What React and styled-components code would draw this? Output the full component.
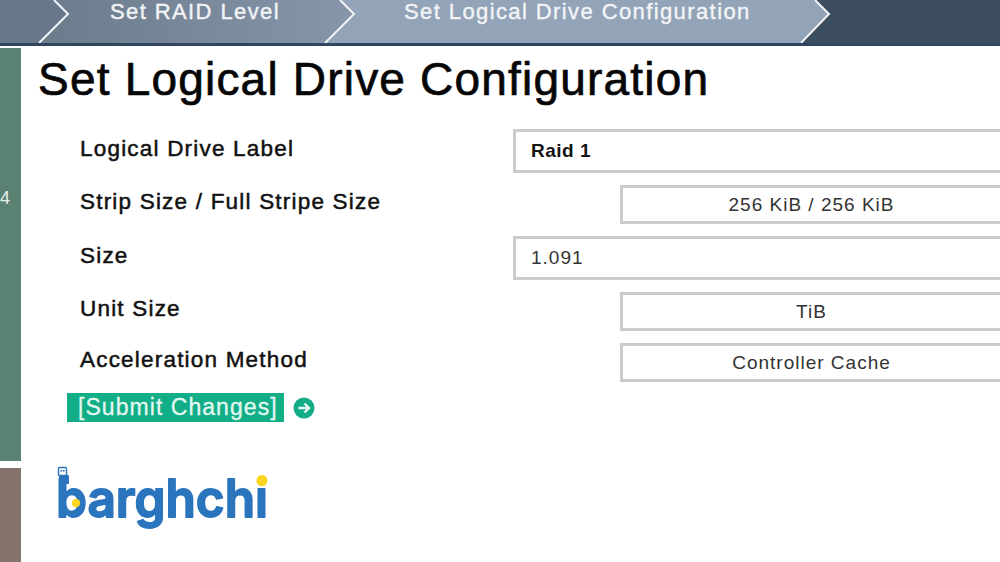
import React from "react";
import styled, { createGlobalStyle } from "styled-components";

const GlobalStyle = createGlobalStyle`
  html, body {
    margin: 0;
    padding: 0;
    background: #fff;
    overflow: hidden;
  }
  body {
    font-family: "Liberation Sans", Arial, sans-serif;
  }
`;

const Page = styled.div`
  position: relative;
  width: 1000px;
  height: 562px;
  display: flex;
  flex-direction: column;
  overflow: hidden;
`;

const Header = styled.div`
  position: relative;
  height: 43px;
  flex: none;
  display: flex;
  align-items: flex-start;
  background: #3c4d60;
  border-bottom: 3px solid #2f4560;
  overflow: hidden;
`;

const Crumbs = styled.svg`
  position: absolute;
  left: 0;
  top: 0;
`;

const Crumb = styled.span`
  position: relative;
  font-size: 22px;
  line-height: 24px;
  color: #f2f4f6;
  letter-spacing: 1.4px;
  -webkit-text-stroke: 0.4px #f2f4f6;
  white-space: nowrap;
  margin-left: ${(p) => p.$left}px;
`;

const Body = styled.div`
  flex: 1;
  display: flex;
  padding-top: 2px;
  min-height: 0;
`;

const Side = styled.div`
  width: 21px;
  flex: none;
  display: flex;
  flex-direction: column;
  gap: 7px;
`;

const GreenTab = styled.div`
  height: 413px;
  background: #5b8172;
  color: #e6eeea;
  font-size: 18px;
  line-height: 20px;
  padding-top: 140px;
  box-sizing: border-box;
  overflow: hidden;
`;

const BrownTab = styled.div`
  flex: 1;
  background: #85746d;
`;

const Main = styled.div`
  flex: 1;
  min-width: 0;
  display: flex;
  flex-direction: column;
  padding-left: 1px;
`;

const Title = styled.h1`
  margin: 3px 0 0 16px;
  font-size: 46px;
  line-height: 56px;
  font-weight: 400;
  color: #060606;
  letter-spacing: 1.2px;
  -webkit-text-stroke: 0.7px #060606;
  white-space: nowrap;
`;

const Form = styled.div`
  margin-top: 22px;
  display: flex;
  flex-direction: column;
  gap: 12px;
`;

const Row = styled.div`
  height: ${(p) => (p.$tall ? 44 : 39)}px;
  display: flex;
  align-items: center;
`;

const Label = styled.div`
  width: ${(p) => (p.$wide ? 598 : 491)}px;
  flex: none;
  padding-left: 58px;
  box-sizing: border-box;
  font-size: 22.5px;
  line-height: 26px;
  color: #111;
  letter-spacing: 1.2px;
  -webkit-text-stroke: 0.5px #111;
  margin-top: -5px;
  white-space: nowrap;
`;

const Field = styled.div`
  flex: 1;
  align-self: stretch;
  box-sizing: border-box;
  display: flex;
  align-items: center;
  justify-content: ${(p) => (p.$center ? "center" : "flex-start")};
  border: 3px solid #cbcbcb;
  border-right: none;
  padding-left: ${(p) => (p.$center ? 0 : 15)}px;
  font-size: 19px;
  letter-spacing: ${(p) => (p.$bold ? 0.5 : 1)}px;
  color: ${(p) => (p.$bold ? "#151515" : "#333")};
  font-weight: ${(p) => (p.$bold ? 700 : 400)};
`;

const SubmitRow = styled.div`
  display: flex;
  align-items: center;
  gap: 9px;
  margin: 11px 0 0 45px;
`;

const Submit = styled.div`
  width: 217px;
  height: 29px;
  box-sizing: border-box;
  padding-left: 11px;
  background: #12ae87;
  color: #e4f8f2;
  font-size: 23px;
  line-height: 28px;
  letter-spacing: 1.05px;
  -webkit-text-stroke: 0.3px #e4f8f2;
  white-space: nowrap;
`;

const Logo = styled.svg`
  position: absolute;
  left: 56px;
  top: 465px;
`;

const LogoWord = styled.text`
  font-family: "Inter", sans-serif;
  font-weight: 600;
  font-size: 52px;
  fill: #2a75bd;
  stroke: #2a75bd;
  stroke-width: 1.8px;
  stroke-linejoin: round;
`;

const rows = [
  { label: "Logical Drive Label", value: "Raid 1", bold: true, tall: true },
  { label: "Strip Size / Full Stripe Size", value: "256 KiB / 256 KiB", center: true, wide: true },
  { label: "Size", value: "1.091", tall: true },
  { label: "Unit Size", value: "TiB", center: true, wide: true },
  { label: "Acceleration Method", value: "Controller Cache", center: true, wide: true },
];

const App = () => (
  <Page>
    <GlobalStyle />
    <Header>
      <Crumbs width="1000" height="43" viewBox="0 0 1000 43">
        <defs>
          <linearGradient id="c1" x1="0" x2="1" y1="0" y2="0">
            <stop offset="0" stopColor="#677888" />
            <stop offset="1" stopColor="#8796aa" />
          </linearGradient>
        </defs>
        <polygon points="0,0 815,0 829,14 801,43 0,43" fill="#93a3b8" />
        <polygon points="0,0 340,0 354,14 325,43 0,43" fill="url(#c1)" />
        <polygon points="0,0 54,0 68,14 39,43 0,43" fill="#67788a" />
        <polyline points="54,0 68,14 39,43" fill="none" stroke="#f2f4f6" strokeWidth="2" />
        <polyline points="340,0 354,14 325,43" fill="none" stroke="#f2f4f6" strokeWidth="2" />
        <polyline points="815,0 829,14 801,43" fill="none" stroke="#f2f4f6" strokeWidth="2" />
      </Crumbs>
      <Crumb $left={110}>Set RAID Level</Crumb>
      <Crumb $left={124}>Set Logical Drive Configuration</Crumb>
    </Header>
    <Body>
      <Side>
        <GreenTab>4</GreenTab>
        <BrownTab />
      </Side>
      <Main>
        <Title>Set Logical Drive Configuration</Title>
        <Form>
          {rows.map((r) => (
            <Row key={r.label} $tall={r.tall}>
              <Label $wide={r.wide}>{r.label}</Label>
              <Field $bold={r.bold} $center={r.center}>{r.value}</Field>
            </Row>
          ))}
        </Form>
        <SubmitRow>
          <Submit>[Submit Changes]</Submit>
          <svg width="22" height="22" viewBox="0 0 22 22">
            <circle cx="11" cy="11" r="10.5" fill="#12ae87" />
            <path d="M5.5 11h10M11.5 6.5l4.5 4.5-4.5 4.5" fill="none" stroke="#e8f8f3" strokeWidth="2.4" />
          </svg>
        </SubmitRow>
      </Main>
    </Body>
    <Logo width="260" height="76" viewBox="0 0 260 76">
      <LogoWord x="0" y="52" textLength="212" lengthAdjust="spacingAndGlyphs">barghchi</LogoWord>
      <rect x="2.5" y="2.5" width="8" height="8" rx="1" fill="#fff" stroke="#2a75bd" strokeWidth="1.4" />
      <rect x="4.5" y="5" width="1.6" height="1.6" fill="#2a75bd" />
      <rect x="7" y="5" width="1.6" height="1.6" fill="#2a75bd" />
      <rect x="3" y="10" width="10" height="9" rx="1" fill="#2a75bd" />
      <circle cx="20" cy="38" r="4.2" fill="#ffd61f" />
      <circle cx="206" cy="15.5" r="5.5" fill="#ffd61f" />
    </Logo>
  </Page>
);

export default App;
